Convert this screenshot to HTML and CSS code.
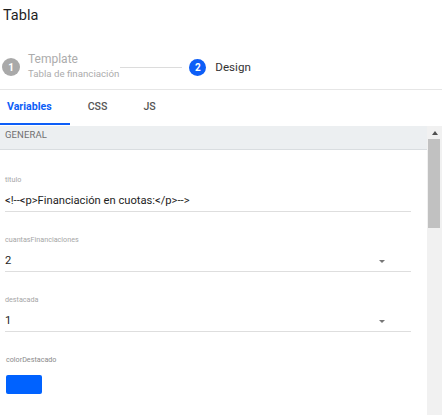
FILE: index.html
```html
<!DOCTYPE html>
<html lang="es">
<head>
<meta charset="utf-8">
<title>Tabla</title>
<link rel="stylesheet" href="styles.css">
</head>
<body>
<div class="page">
  <h1 class="title">Tabla</h1>
  <div class="stepper">
    <div class="step">
      <span class="dot dot-done">1</span>
      <div class="step-text">
        <div class="step-name muted">Template</div>
        <div class="step-sub">Tabla de financiación</div>
      </div>
    </div>
    <div class="connector"></div>
    <div class="step">
      <span class="dot dot-active">2</span>
      <div class="step-text">
        <div class="step-name">Design</div>
      </div>
    </div>
  </div>
  <div class="tabs">
    <div class="tab tab-first active">Variables</div>
    <div class="tab">CSS</div>
    <div class="tab">JS</div>
  </div>
  <div class="body">
    <div class="content">
      <div class="section-head">GENERAL</div>
      <div class="fields">
        <div class="field">
          <div class="label">titulo</div>
          <div class="value">&lt;!--&lt;p&gt;Financiación en cuotas:&lt;/p&gt;--&gt;</div>
        </div>
        <div class="field">
          <div class="label">cuantasFinanciaciones</div>
          <div class="value select"><span>2</span><span class="caret"></span></div>
        </div>
        <div class="field">
          <div class="label">destacada</div>
          <div class="value select"><span>1</span><span class="caret"></span></div>
        </div>
        <div class="field field-color">
          <div class="label label-dark">colorDestacado</div>
          <div class="swatch"></div>
        </div>
      </div>
    </div>
    <div class="scrollbar">
      <div class="sb-button"><span class="sb-arrow"></span></div>
      <div class="sb-thumb"></div>
    </div>
  </div>
</div>
</body>
</html>
```

FILE: styles.css
```css
html, body {
  margin: 0;
  padding: 0;
  background: #ffffff;
}

.page {
  width: 442px;
  height: 415px;
  overflow: hidden;
  display: flex;
  flex-direction: column;
  font-family: Roboto, "Liberation Sans", Arial, sans-serif;
  color: #222222;
}

.title {
  margin: 0;
  padding: 7px 0 0 3px;
  font-size: 14.5px;
  line-height: 18px;
  font-weight: 400;
  color: #1f1f1f;
}

.stepper {
  margin-top: 25px;
  height: 34px;
  padding: 0 0 5px 2px;
  border-bottom: 1px solid #e6e6e6;
  display: flex;
  align-items: center;
}

.step {
  display: flex;
  align-items: center;
}

.dot {
  width: 18px;
  height: 18px;
  border-radius: 50%;
  display: flex;
  align-items: center;
  justify-content: center;
  color: #ffffff;
  font-size: 10px;
  font-weight: 700;
  flex: none;
}

.dot-done {
  background: #a9a9a9;
}

.dot-active {
  background: #0d5ef7;
  width: 17px;
  height: 17px;
}

.step-text {
  margin-left: 8px;
  margin-top: -2px;
  display: flex;
  flex-direction: column;
}

.step-name {
  font-size: 12px;
  line-height: 15px;
  color: #333333;
}

.step-name.muted {
  color: #acacac;
}

.step-sub {
  font-size: 9.7px;
  line-height: 13px;
  color: #acacac;
}

.step:last-child .step-text {
  margin-left: 9px;
  margin-top: 0;
}

.step:last-child .step-name {
  font-size: 11.6px;
}

.connector {
  width: 62px;
  height: 1px;
  background: #dcdcdc;
  margin: 0 7px 0 1px;
}

.tabs {
  display: flex;
  padding-bottom: 1px;
}

.tab {
  height: 33px;
  padding: 0 18px;
  display: flex;
  align-items: center;
  font-size: 10.6px;
  font-weight: 500;
  color: #555555;
  border-bottom: 2px solid transparent;
}

.tab-first {
  padding-left: 7px;
}

.tab.active {
  color: #0d5ef7;
  font-weight: 700;
  border-bottom-color: #0d5ef7;
}

.body {
  flex: 1;
  display: flex;
  min-height: 0;
}

.content {
  flex: 1;
  min-width: 0;
  overflow: hidden;
}

.section-head {
  height: 20px;
  padding: 3px 0 0 5px;
  background: #eceff1;
  border-bottom: 1px solid #d9dde0;
  font-size: 9.5px;
  line-height: 12px;
  color: #707070;
  letter-spacing: 0.1px;
}

.fields {
  padding: 25px 16px 0 5px;
  display: flex;
  flex-direction: column;
  gap: 23px;
}

.field {
  display: flex;
  flex-direction: column;
}

.label {
  font-size: 7.2px;
  line-height: 10px;
  color: #a6a6a6;
}

.label-dark {
  color: #8a8a8a;
  padding-left: 1px;
}

.value {
  margin-top: 8px;
  padding-bottom: 2px;
  border-bottom: 1px solid #dedede;
  font-size: 11.2px;
  line-height: 16px;
  color: #1e1e1e;
}

.select {
  display: flex;
  align-items: center;
  justify-content: space-between;
}

.caret {
  width: 0;
  height: 0;
  border-left: 3px solid transparent;
  border-right: 3px solid transparent;
  border-top: 3px solid #777777;
  margin-right: 26px;
}

.swatch {
  margin-top: 10px;
  margin-left: 1px;
  width: 36px;
  height: 19px;
  border-radius: 2px;
  background: #0062ff;
}

.scrollbar {
  width: 15px;
  flex: none;
  background: #f1f1f1;
  display: flex;
  flex-direction: column;
}

.sb-button {
  height: 13px;
  display: flex;
  align-items: center;
  justify-content: center;
}

.sb-arrow {
  width: 0;
  height: 0;
  border-left: 3.5px solid transparent;
  border-right: 3.5px solid transparent;
  border-bottom: 4px solid #505050;
  margin-top: 1px;
}

.sb-thumb {
  height: 89px;
  margin: 0 2px 0 1px;
  background: #c1c1c1;
}
```
